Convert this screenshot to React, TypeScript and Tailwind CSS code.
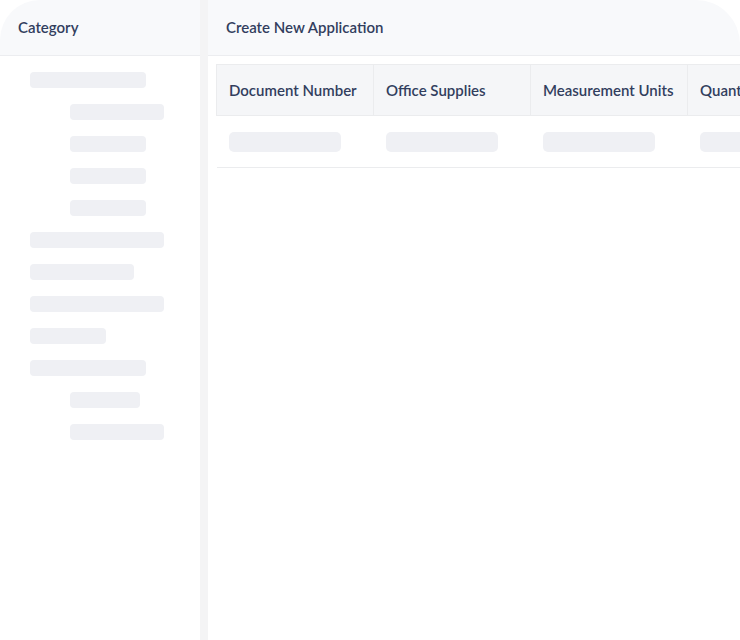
import React from 'react';

const sidebarBars = [
  { indent: false, w: 'w-[116px]' },
  { indent: true, w: 'w-[94px]' },
  { indent: true, w: 'w-[76px]' },
  { indent: true, w: 'w-[76px]' },
  { indent: true, w: 'w-[76px]' },
  { indent: false, w: 'w-[134px]' },
  { indent: false, w: 'w-[104px]' },
  { indent: false, w: 'w-[134px]' },
  { indent: false, w: 'w-[76px]' },
  { indent: false, w: 'w-[116px]' },
  { indent: true, w: 'w-[70px]' },
  { indent: true, w: 'w-[94px]' },
];

const columns = ['Document Number', 'Office Supplies', 'Measurement Units', 'Quantity'];

export default function App() {
  return (
    <div
      className="flex h-[640px] w-[740px] overflow-hidden bg-white text-[#323e5e]"
      style={{ fontFamily: 'Lato, "Noto Sans", sans-serif' }}
    >
      {/* Sidebar */}
      <aside className="flex w-[200px] shrink-0 flex-col rounded-tl-[40px] bg-white">
        <div className="flex h-[56px] items-center rounded-tl-[40px] border-b border-[#ecedf0] bg-[#f8f9fb] pl-[18px]">
          <span className="text-[15px] font-semibold">Category</span>
        </div>
        <div className="flex flex-col gap-4 pt-4 pl-[30px]">
          {sidebarBars.map((b, i) => (
            <div
              key={i}
              className={`h-4 rounded-[4px] bg-[#eff0f4] ${b.w} ${b.indent ? 'ml-10' : ''}`}
            />
          ))}
        </div>
      </aside>

      {/* Divider */}
      <div className="w-2 shrink-0 bg-[#f4f4f5]" />

      {/* Main */}
      <main className="flex min-w-0 flex-1 flex-col rounded-tr-[44px] bg-white">
        <div className="flex h-[56px] items-center rounded-tr-[44px] border-b border-[#ecedf0] bg-[#f8f9fb] pl-[18px]">
          <span className="text-[15px] font-semibold">Create New Application</span>
        </div>
        <div className="pt-2 pl-2">
          <table className="w-[628px] table-fixed border-collapse">
            <thead>
              <tr className="h-[51px] bg-[#f5f6f8]">
                {columns.map((c) => (
                  <th
                    key={c}
                    className="w-[157px] overflow-hidden whitespace-nowrap border border-[#ebecee] pl-3 text-left text-[15px] font-semibold"
                  >
                    {c}
                  </th>
                ))}
              </tr>
            </thead>
            <tbody>
              <tr className="h-[52px] border-b border-[#ebecee]">
                {columns.map((c) => (
                  <td key={c} className="pl-3">
                    <div className="h-5 w-[112px] rounded-[5px] bg-[#eff0f4]" />
                  </td>
                ))}
              </tr>
            </tbody>
          </table>
        </div>
      </main>
    </div>
  );
}
